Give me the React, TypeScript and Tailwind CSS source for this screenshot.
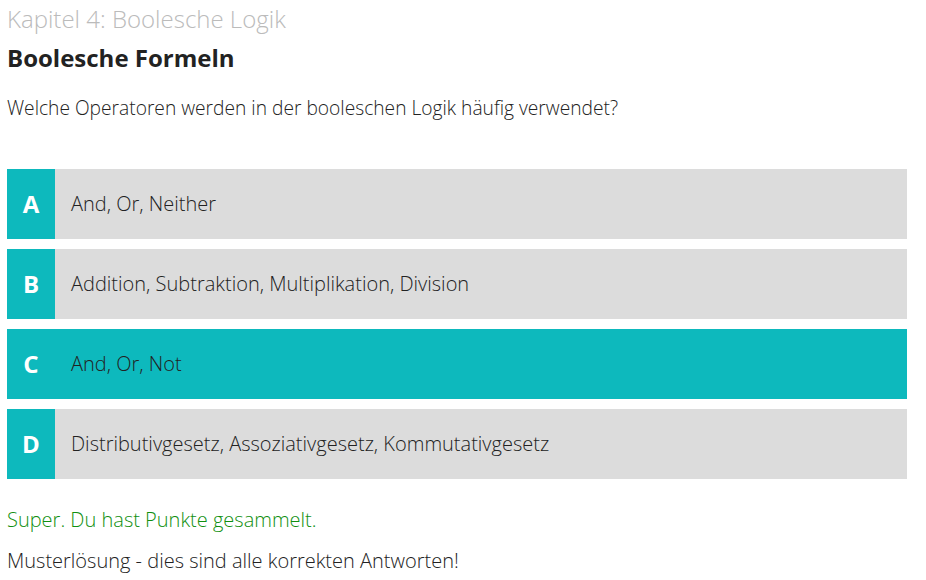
import React from 'react'

const answers = [
    {key: 'A', text: 'And, Or, Neither', active: false},
    {key: 'B', text: 'Addition, Subtraktion, Multiplikation, Division', active: false},
    {key: 'C', text: 'And, Or, Not', active: true},
    {key: 'D', text: 'Distributivgesetz, Assoziativgesetz, Kommutativgesetz', active: false},
]

const App = () => {
    return (
        <div className="min-h-screen bg-white px-[7px] text-[#222]" style={{fontFamily: '"Open Sans", sans-serif'}}>
            <h2 className="text-[24px] font-light text-[#bbbbbb] leading-[36px] pt-[1px]">Kapitel 4: Boolesche Logik</h2>
            <h1 className="text-[24px] font-bold text-[#222] leading-[32px] mt-[5px]">Boolesche Formeln</h1>
            <p className="text-[19.2px] font-light mt-[20px] leading-[28px]">
                Welche Operatoren werden in der booleschen Logik häufig verwendet?
            </p>

            <div className="mt-[47px] w-[900px] flex flex-col gap-[10px]">
                {answers.map(a => (
                    <div key={a.key} className={`flex h-[70px] items-center ${a.active ? 'bg-[#0db9bd]' : 'bg-[#dcdcdc]'}`}>
                        <div className="w-[48px] h-full bg-[#0db9bd] flex items-center justify-center text-white font-bold text-[24px]">
                            {a.key}
                        </div>
                        <div className="pl-[16px] text-[20px] font-light text-[#222]">{a.text}</div>
                    </div>
                ))}
            </div>

            <p className="mt-[27px] text-[20px] font-light text-[#108f10] leading-[28px]">Super. Du hast Punkte gesammelt.</p>
            <p className="mt-[13px] text-[20px] font-light leading-[28px]">Musterlösung - dies sind alle korrekten Antworten!</p>
        </div>
    )
}

export default App
